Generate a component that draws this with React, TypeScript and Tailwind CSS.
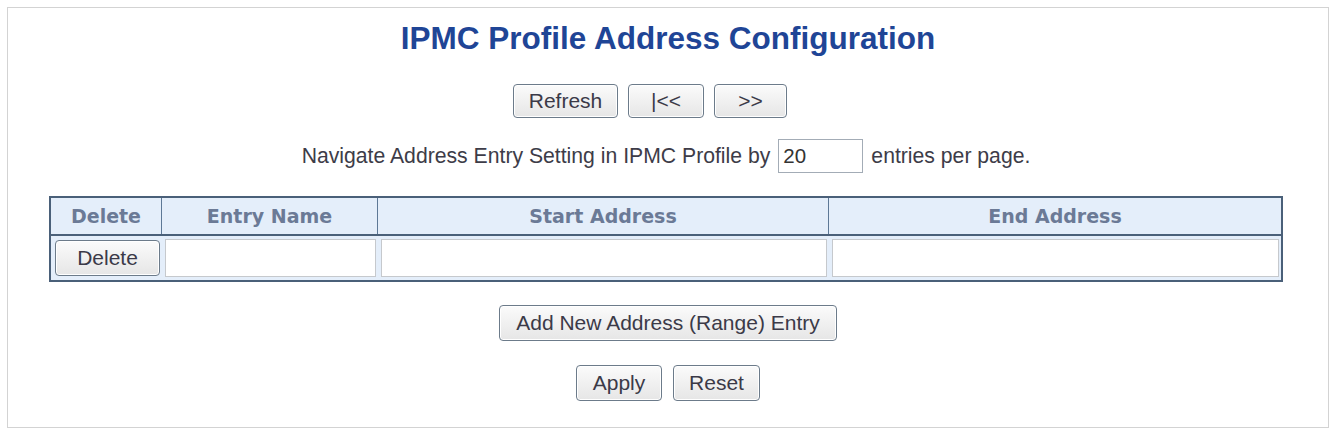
import React, { useState } from 'react';

const fontSans = { fontFamily: '"Liberation Sans", Arial, sans-serif' };

interface BtnProps {
  label: string;
  className?: string;
}

const Button: React.FC<BtnProps> = ({ label, className = '' }) => (
  <button
    type="button"
    className={`flex items-center justify-center rounded-[4px] border border-[#6c7b8a] bg-gradient-to-b from-[#fbfbfb] to-[#e6e6e6] text-[21px] text-[#3b3a48] shadow-[inset_0_0_0_1px_#ffffff] ${className}`}
    style={fontSans}
  >
    {label}
  </button>
);

const headers = ['Delete', 'Entry Name', 'Start Address', 'End Address'];

export default function App() {
  const [perPage, setPerPage] = useState('20');

  return (
    <div className="h-[432px] w-[1335px] bg-white pt-[7px] pl-[7px]" style={fontSans}>
      <div className="flex h-[421px] w-[1322px] flex-col border border-[#d3d3d3]">
        {/* Title */}
        <h1 className="pt-[15px] text-center text-[31.5px] leading-[30px] font-bold text-[#1f4596]">
          IPMC Profile Address Configuration
        </h1>

        {/* Paging buttons */}
        <div className="mt-[31px] flex justify-center gap-[10px] pr-[36px]">
          <Button label="Refresh" className="h-[34px] w-[105px]" />
          <Button label="|<<" className="h-[34px] w-[76px]" />
          <Button label=">>" className="h-[34px] w-[73px]" />
        </div>

        {/* Entries per page */}
        <div className="mt-[21px] flex h-[34px] items-center justify-center pr-[4px] text-[21.2px] text-[#3d3c48]">
          <span>Navigate Address Entry Setting in IPMC Profile by</span>
          <input
            value={perPage}
            onChange={(e) => setPerPage(e.target.value)}
            className="mx-[8px] h-[34px] w-[85px] border border-[#a3acb6] bg-white px-[4px] text-[20.5px] text-[#333] outline-none"
          />
          <span>entries per page.</span>
        </div>

        {/* Address table */}
        <div className="mt-[23px] ml-[41px] w-[1234px] border-2 border-[#4a6079] bg-[#e4eefa]">
          <div
            className="grid h-[38px] grid-cols-[111px_216px_451px_1fr] border-b-2 border-[#4a6079] text-[19px] font-bold text-[#6b7a96]"
            style={{ fontFamily: '"DejaVu Sans", Verdana, sans-serif' }}
          >
            {headers.map((h, i) => (
              <div
                key={h}
                className={`flex items-center justify-center ${i < headers.length - 1 ? 'border-r border-[#5d7896]' : ''}`}
              >
                {h}
              </div>
            ))}
          </div>
          <div className="grid h-[44px] grid-cols-[111px_216px_451px_1fr] items-center">
            <div className="flex h-full items-center pl-[4px] pr-[1px]">
              <Button label="Delete" className="h-[36px] w-[105px]" />
            </div>
            <div className="h-full py-[3px] pr-[2px] pl-[3px]">
              <div className="h-full border border-[#c6c9cd] bg-white" />
            </div>
            <div className="h-full py-[3px] pr-[2px] pl-[3px]">
              <div className="h-full border border-[#c6c9cd] bg-white" />
            </div>
            <div className="h-full py-[3px] pr-[2px] pl-[3px]">
              <div className="h-full border border-[#c6c9cd] bg-white" />
            </div>
          </div>
        </div>

        {/* Add entry */}
        <div className="mt-[23px] flex justify-center">
          <Button label="Add New Address (Range) Entry" className="h-[36px] w-[338px]" />
        </div>

        {/* Apply / Reset */}
        <div className="mt-[24px] flex justify-center gap-[11px]">
          <Button label="Apply" className="h-[36px] w-[86px]" />
          <Button label="Reset" className="h-[36px] w-[87px]" />
        </div>
      </div>
    </div>
  );
}
